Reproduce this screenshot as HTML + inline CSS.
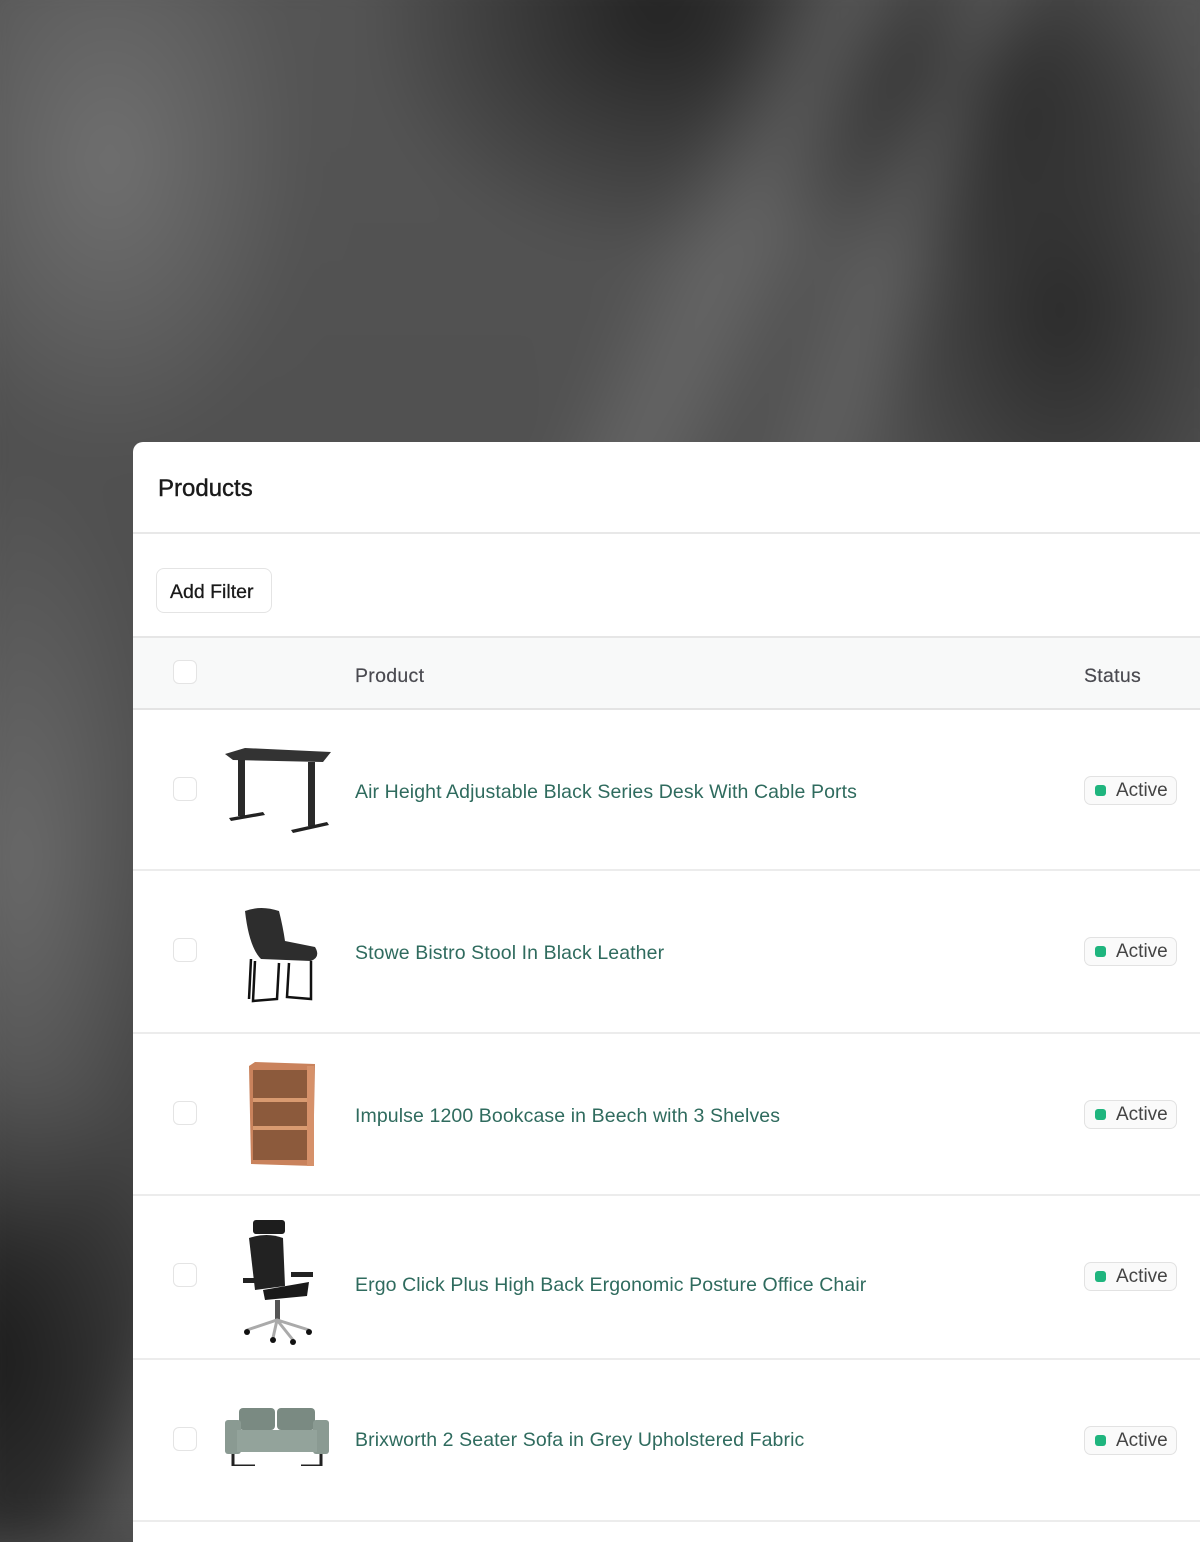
<!DOCTYPE html>
<html><head><meta charset="utf-8"><style>
*{box-sizing:border-box;margin:0;padding:0}
body{width:1200px;height:1500px;overflow:hidden;position:relative;background:#4a4a4a;font-family:"Liberation Sans",sans-serif}
.bg{position:absolute;inset:-40px;filter:blur(22px);background:
linear-gradient(115deg,transparent 40%,rgba(120,120,120,.5) 45%,transparent 50%),
linear-gradient(110deg,transparent 52%,rgba(110,110,110,.5) 56%,transparent 60%),
radial-gradient(ellipse 200px 300px at 150px 200px,#707070,transparent),
radial-gradient(ellipse 250px 200px at 1000px 120px,#262626,transparent),
radial-gradient(ellipse 300px 250px at 700px 50px,#222,transparent),
radial-gradient(ellipse 200px 300px at 1100px 350px,#2a2a2a,transparent),
radial-gradient(ellipse 150px 400px at 60px 900px,#6a6a6a,transparent),
radial-gradient(ellipse 200px 300px at 30px 1400px,#1c1c1c,transparent),
linear-gradient(180deg,#555,#4e4e4e 50%,#3a3a3a)}
.card{position:absolute;left:133px;top:442px;width:1100px;height:1100px;background:#fff;border-top-left-radius:10px}
.hdr{height:92px;border-bottom:2px solid #e8e8e8;padding:33px 0 0 25px;font-size:24px;color:#1a1a1a;-webkit-text-stroke:.4px #1a1a1a}
.flt{height:104px;border-bottom:2px solid #e6e6e6;position:relative}
.btn{position:absolute;left:23px;top:34px;width:116px;height:45px;border:1px solid #e4e4e4;border-radius:8px;font-size:19.5px;color:#1a1a1a;padding:12px 0 0 13px;-webkit-text-stroke:.3px #1a1a1a}
.th{height:72px;background:#f8f9f9;border-bottom:2px solid #e4e4e4;position:relative;font-size:19.5px;color:#4a4a50;letter-spacing:.3px;-webkit-text-stroke:.2px #4a4a50}
.cb{position:absolute;left:40px;width:24px;height:24px;border:1.5px solid #e4e4e4;border-radius:6px;background:#fff}
.row{border-bottom:2px solid #ececec;position:relative}
.name{position:absolute;left:222px;font-size:19.5px;color:#2f6b5e;letter-spacing:.1px}
.badge{position:absolute;left:951px;width:93px;height:29px;border:1.5px solid #e2e2e2;border-radius:7px;background:#fafafa;font-size:19px;color:#444;padding:3px 0 0 31px}
.badge:before{content:"";position:absolute;left:10px;top:8px;width:11px;height:11px;border-radius:3px;background:#1fb57e}
svg{position:absolute}
</style></head><body>
<div class="bg"></div>
<div class="card">
<div class="hdr">Products</div>
<div class="flt"><div class="btn">Add Filter</div></div>
<div class="th"><div class="cb" style="top:22px"></div><span style="position:absolute;left:222px;top:27px">Product</span><span style="position:absolute;left:951px;top:27px">Status</span></div>

<div class="row" style="height:161px"><div class="cb" style="top:67px"></div>
<svg style="left:90px;top:38px" width="110" height="86" viewBox="0 0 110 86"><path d="M2 6 L22 0 L108 4 L100 14 L10 12Z" fill="#333"/><rect x="15" y="12" width="7" height="56" fill="#2a2a2a"/><rect x="85" y="14" width="7" height="64" fill="#2a2a2a"/><path d="M6 70 L40 64 L42 67 L8 73Z" fill="#222"/><path d="M68 82 L104 74 L106 77 L70 85Z" fill="#222"/></svg>
<span class="name" style="top:71px">Air Height Adjustable Black Series Desk With Cable Ports</span><div class="badge" style="top:66px">Active</div></div>

<div class="row" style="height:163px"><div class="cb" style="top:67px"></div>
<svg style="left:108px;top:36px" width="80" height="100" viewBox="0 0 80 100"><path d="M4 4 Q20 -2 38 4 Q42 20 44 34 L74 40 Q80 50 70 54 L20 52 Q8 40 4 4Z" fill="#2d2d2d"/><path d="M10 52 L8 92 M14 54 L12 94 L36 92 L38 56 M48 56 L46 90 L70 92 L70 54" stroke="#111" stroke-width="2.5" fill="none"/></svg>
<span class="name" style="top:71px">Stowe Bistro Stool In Black Leather</span><div class="badge" style="top:66px">Active</div></div>

<div class="row" style="height:162px"><div class="cb" style="top:67px"></div>
<svg style="left:114px;top:28px" width="70" height="106" viewBox="0 0 70 106"><path d="M2 4 L8 0 L68 2 L66 104 L4 102Z" fill="#c9825c"/><rect x="6" y="8" width="54" height="90" fill="#8c5a3c"/><rect x="6" y="36" width="54" height="4" fill="#d99a70"/><rect x="6" y="64" width="54" height="4" fill="#d99a70"/><rect x="60" y="4" width="7" height="100" fill="#d6916a"/></svg>
<span class="name" style="top:71px">Impulse 1200 Bookcase in Beech with 3 Shelves</span><div class="badge" style="top:66px">Active</div></div>

<div class="row" style="height:164px"><div class="cb" style="top:67px"></div>
<svg style="left:106px;top:24px" width="80" height="128" viewBox="0 0 80 128"><rect x="14" y="0" width="32" height="14" rx="3" fill="#1d1d1d"/><path d="M10 18 Q28 12 44 18 L46 66 L16 70Z" fill="#222"/><path d="M24 70 L70 62 L68 76 L26 80Z" fill="#1a1a1a"/><rect x="4" y="58" width="20" height="5" fill="#222"/><rect x="52" y="52" width="22" height="5" fill="#222"/><rect x="36" y="80" width="5" height="22" fill="#555"/><path d="M8 110 L38 100 L70 110 M38 100 L34 118 M38 100 L54 120" stroke="#aaa" stroke-width="3" fill="none"/><circle cx="8" cy="112" r="3" fill="#111"/><circle cx="70" cy="112" r="3" fill="#111"/><circle cx="34" cy="120" r="3" fill="#111"/><circle cx="54" cy="122" r="3" fill="#111"/></svg>
<span class="name" style="top:78px">Ergo Click Plus High Back Ergonomic Posture Office Chair</span><div class="badge" style="top:66px">Active</div></div>

<div class="row" style="height:162px"><div class="cb" style="top:67px"></div>
<svg style="left:92px;top:46px" width="106" height="60" viewBox="0 0 106 60"><rect x="14" y="2" width="36" height="22" rx="4" fill="#7a8a82"/><rect x="52" y="2" width="38" height="22" rx="4" fill="#7a8a82"/><rect x="0" y="14" width="16" height="34" rx="3" fill="#8a9a92"/><rect x="88" y="14" width="16" height="34" rx="3" fill="#8a9a92"/><rect x="12" y="24" width="80" height="22" fill="#93a39b"/><path d="M8 48 L8 60 L30 60 M96 48 L96 60 L76 60" stroke="#222" stroke-width="3" fill="none"/></svg>
<span class="name" style="top:69px">Brixworth 2 Seater Sofa in Grey Upholstered Fabric</span><div class="badge" style="top:66px">Active</div></div>
</div>
</body></html>
